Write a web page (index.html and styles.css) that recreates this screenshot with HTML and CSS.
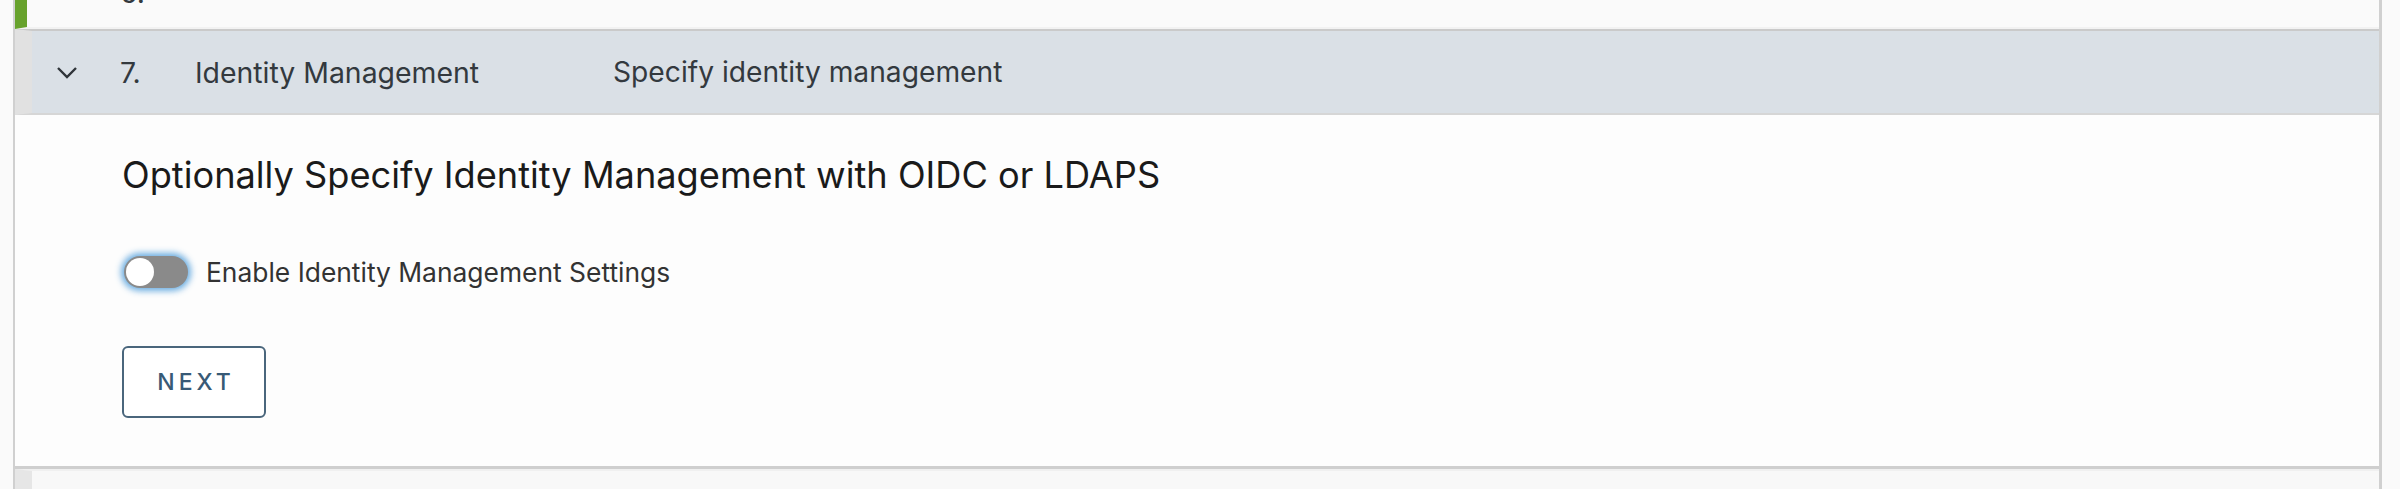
FILE: index.html
```html
<!DOCTYPE html>
<html lang="en">
<head>
  <meta charset="UTF-8">
  <meta name="viewport" content="width=device-width, initial-scale=1.0">
  <title>Identity Management</title>
  <link rel="stylesheet" href="styles.css">
</head>
<body>
<div class="stepper">
  <div class="step done">
    <div class="step-head">
      <span class="num">6.</span>
    </div>
  </div>

  <div class="step active">
    <div class="step-head">
      <svg class="chev" viewBox="0 0 22 13" width="22" height="13">
        <polyline points="2,2 11,11 20,2" fill="none" stroke="#2f3439" stroke-width="2.4"/>
      </svg>
      <span class="num">7.</span>
      <span class="name">Identity Management</span>
      <span class="desc">Specify identity management</span>
    </div>
    <div class="step-body">
      <h3 class="title">Optionally Specify Identity Management with OIDC or LDAPS</h3>
      <label class="toggle">
        <input type="checkbox">
        <span class="track"></span>
        <span class="toggle-text">Enable Identity Management Settings</span>
      </label>
      <button class="btn-outline">Next</button>
    </div>
  </div>

  <div class="step next"></div>
</div>
</body>
</html>
```

FILE: styles.css
```css
body { margin: 0; background: #fafafa; font-family: Inter, "Noto Sans", sans-serif; }
.stepper { margin: 0 18px 0 13px; border-left: 2px solid #d0d0d0; border-right: 3px solid #d0d0d0; height: 489px; overflow: hidden; }

.step.done { height: 27px; overflow: hidden; display: flex; flex-direction: column; justify-content: flex-end; border-left: 12px solid #67a22c; border-bottom: 2px solid #f2f2f2; background: #fafafa; }
.step.done .step-head { padding-bottom: 17px; padding-left: 93px; }

.step-head { display: flex; align-items: center; font-size: 28.4px; color: #33393e; }
.step.active .step-head { height: 82px; padding-left: 24px; background: #dae0e6; border-top: 2px solid #cacaca; border-bottom: 2px solid #d6d6d6; border-left: 17px solid #e1e1e1; }
.chev { width: 22px; }
.num { width: 75px; margin-left: 42px; }
.step.done .num { margin-left: 0; }
.name { width: 418px; }
.desc { font-size: 28.2px; }

.step-body { background: #fdfdfd; padding: 32px 0 48px 107px; border-bottom: 3px solid #cfcfcf; }
.title { margin: 0; font-size: 36.2px; font-weight: 400; color: #1a1a1a; line-height: 56px; }

.toggle { display: flex; align-items: center; margin-top: 53px; gap: 18px; font-size: 26.4px; color: #333; }
.toggle input { display: none; }
.track { position: relative; width: 64px; height: 32px; border-radius: 16px; background: #8a8a8a; box-shadow: 0 0 6px 3px rgba(84, 160, 220, 0.85); margin-left: 2px; }
.track::after { content: ""; position: absolute; left: 2px; top: 2px; width: 28px; height: 28px; border-radius: 50%; background: #fff; }

.btn-outline { display: block; margin-top: 58px; width: 144px; height: 72px; border: 2px solid #4a667c; border-radius: 6px; background: #fff; color: #385a76; font-family: Inter, sans-serif; font-size: 23px; font-weight: 500; text-transform: uppercase; letter-spacing: 4px; padding: 0 0 0 4px; }

.step.next { height: 30px; background: #f8f8f8; border-left: 17px solid #e6e6e6; border-top: 2px solid #f0f0f0; }
```
